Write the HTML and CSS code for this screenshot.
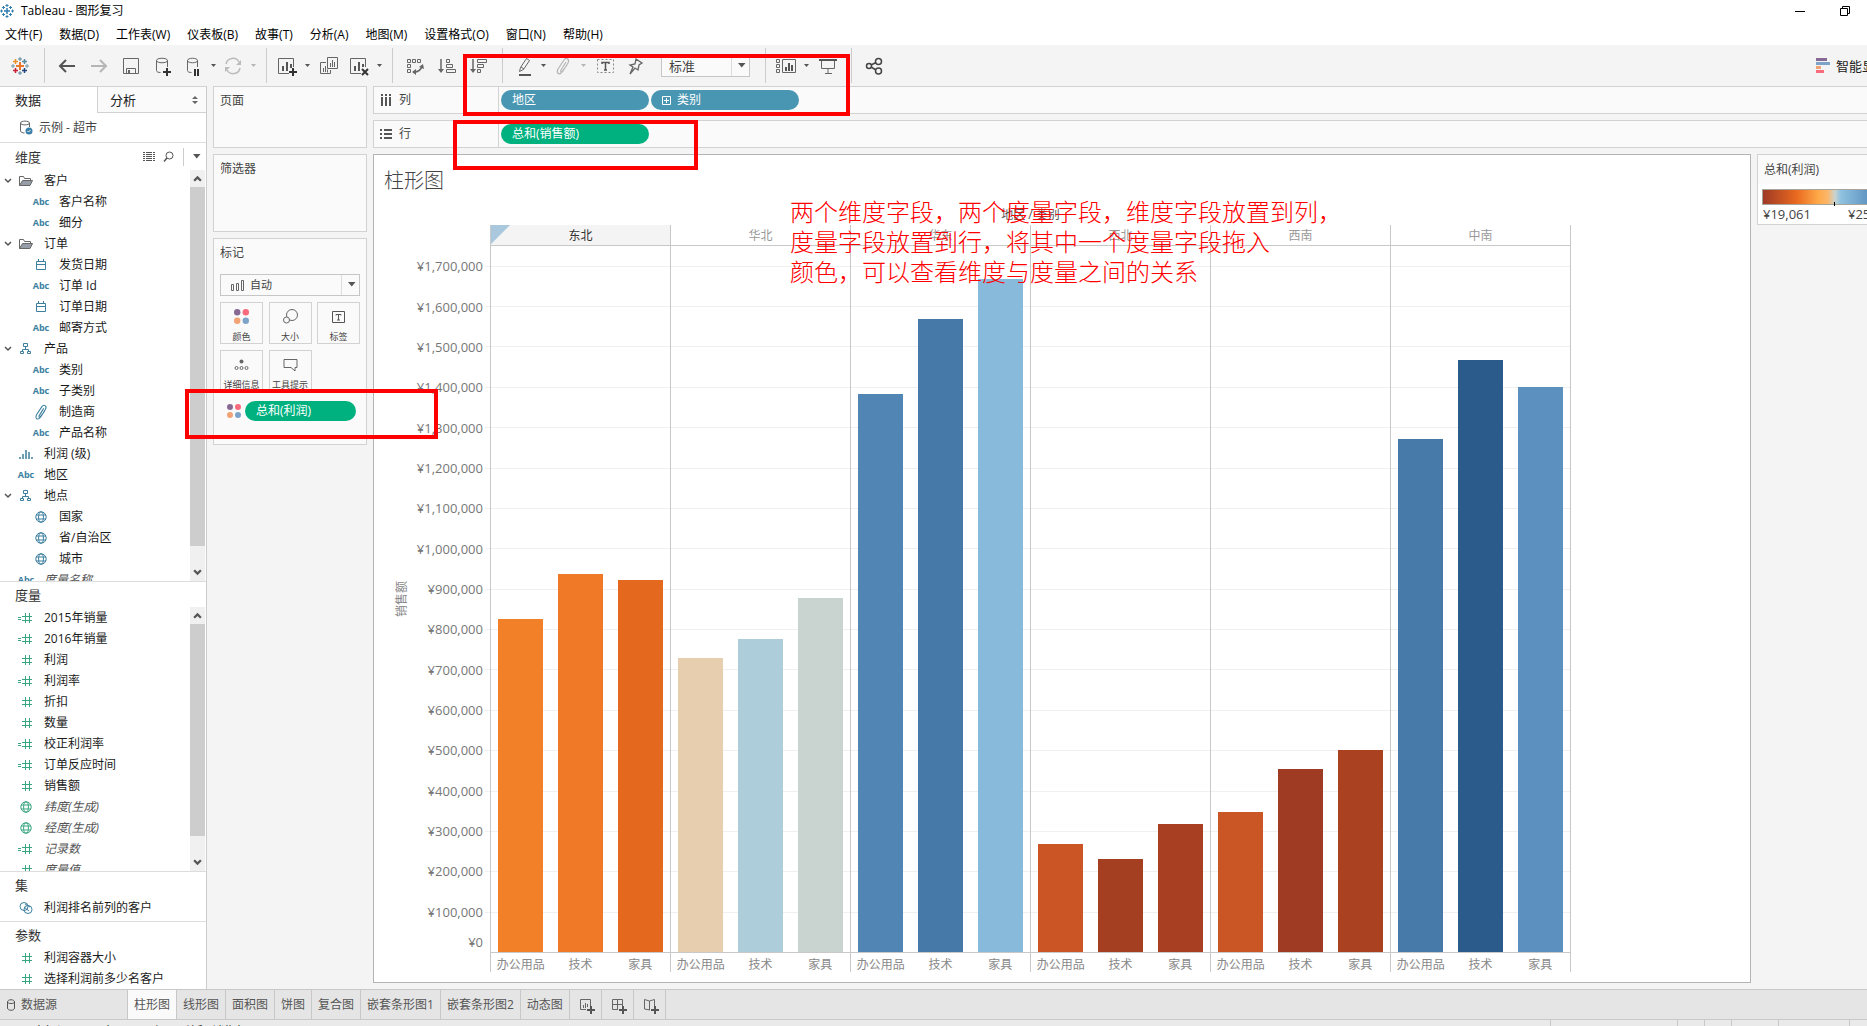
FILE: index.html
```html
<!DOCTYPE html>
<html lang="zh-CN">
<head>
<meta charset="utf-8">
<title>Tableau - 图形复习</title>
<link rel="stylesheet" href="styles.css">
</head>
<body>
<svg class="defs" aria-hidden="true">
  <defs>
    <symbol id="logo" viewBox="0 0 20 20"><g fill="none" stroke-width="2"><path stroke="#e8762b" d="M10 6v8M6 10h8"/><path stroke="#5b879b" stroke-width="1" d="M10 1v4M8 3h4M10 15v4M8 17h4"/><path stroke="#eb912c" stroke-width="1.500" d="M5.500 3v5M3 5.500h5"/><path stroke="#59879b" stroke-width="1.500" d="M14.500 3v5M12 5.500h5"/><path stroke="#c72035" stroke-width="1.500" d="M5.500 12v5M3 14.500h5"/><path stroke="#1f447e" stroke-width="1.500" d="M14.500 12v5M12 14.500h5"/><path stroke="#7099a6" stroke-width="1" d="M1 10h4M3 8v4M15 10h4M17 8v4"/></g></symbol>
    <symbol id="logo-blue" viewBox="0 0 14 14"><g fill="none" stroke="#2f7fb0"><path stroke-width="1.500" d="M7 4v6M4 7h6"/><path d="M7 0v3M5.500 1.500h3M7 11v3M5.500 12.500h3M0 7h3M1.500 5.500v3M11 7h3M12.500 5.500v3M3.500 2v3M2 3.500h3M10.500 2v3M9 3.500h3M3.500 9v3M2 10.500h3M10.500 9v3M9 10.500h3"/></g></symbol>
    <symbol id="back" viewBox="0 0 20 20"><path fill="none" stroke="#555" stroke-width="2" d="M18 10H3M9 4L3 10l6 6"/></symbol>
    <symbol id="fwd" viewBox="0 0 20 20"><path fill="none" stroke="#b5b5b5" stroke-width="2" d="M2 10h15M11 4l6 6-6 6"/></symbol>
    <symbol id="save" viewBox="0 0 20 20"><path fill="none" stroke="#666" d="M2.500 2.500h15v15h-15zM5.500 17v-4.500h9V17"/><path fill="#666" d="M7 14h2v3H7z"/></symbol>
    <symbol id="dbplus" viewBox="0 0 20 20"><path fill="none" stroke="#666" d="M3.500 4.500v10c0 1.500 2 2 4 2M14.500 4.500V11M3.500 4.500c0-3 11-3 11 0s-11 3-11 0"/><path stroke="#333" stroke-width="2" d="M14 12v8M10 16h8"/></symbol>
    <symbol id="dbpause" viewBox="0 0 20 20"><path fill="none" stroke="#666" d="M4.500 4.500v10c0 1.500 2 2 4 2M14.500 4.500V11M4.500 4.500c0-3 10-3 10 0s-10 3-10 0"/><path stroke="#333" stroke-width="2" d="M12 13v7M15 13v7"/></symbol>
    <symbol id="refresh" viewBox="0 0 20 20"><path fill="none" stroke="#bbb" stroke-width="1.500" d="M3 8a7 7 0 0 1 13-2M17 12a7 7 0 0 1-13 2"/><path fill="#bbb" d="M18 4v5h-5zM2 16v-5h5z"/></symbol>
    <symbol id="caret" viewBox="0 0 8 8"><path fill="currentColor" d="M2 2h5L4.500 5z"/></symbol>
    <symbol id="newsheet" viewBox="0 0 20 20"><path fill="none" stroke="#666" d="M12 17.500H1.500v-15h15V11"/><path stroke="#555" stroke-width="2" d="M6 10v5M10 6v9M14 8v4"/><path stroke="#333" stroke-width="2" d="M16 12v8M12 16h8"/></symbol>
    <symbol id="dupsheet" viewBox="0 0 20 20"><path fill="none" stroke="#666" d="M8.500 1.500h10v11h-10zM7 6.500H1.500v11h10V14"/><path stroke="#666" d="M11.500 7v4M13.500 4v7M15.500 6v5M4.500 12v4M6.500 10v6M8.500 13.500v3"/></symbol>
    <symbol id="clearsheet" viewBox="0 0 20 20"><path fill="none" stroke="#666" d="M12 17.500H1.500v-15h15V11"/><path stroke="#555" stroke-width="2" d="M6 10v5M10 6v9M14 8v3"/><path stroke="#333" stroke-width="2" d="M13 13l6 6M19 13l-6 6"/></symbol>
    <symbol id="swap" viewBox="0 0 20 20"><path fill="none" stroke="#666" d="M2.500 3.500h3v3h-3zM7.500 3.500h3v3h-3zM12.500 3.500h3v3h-3zM2.500 8.500h3v3h-3zM2.500 13.500h3v3h-3z"/><path fill="none" stroke="#666" stroke-width="1.500" d="M9 16c4 0 7-2 8-6"/><path fill="#666" d="M7 16l4-3v6zM14 11l4-3 1 5z"/></symbol>
    <symbol id="sortasc" viewBox="0 0 20 20"><path stroke="#666" stroke-width="1.500" d="M4 3v12"/><path fill="#666" d="M1 13h6l-3 4z"/><path fill="none" stroke="#666" d="M9.500 3.500h3v3h-3zM9.500 8.500h6v3h-6zM9.500 13.500h9v3h-9z"/></symbol>
    <symbol id="sortdesc" viewBox="0 0 20 20"><path stroke="#666" stroke-width="1.500" d="M4 3v12"/><path fill="#666" d="M1 13h6l-3 4z"/><path fill="none" stroke="#666" d="M8.500 3.500h9v3h-9zM8.500 8.500h6v3h-6zM8.500 13.500h3v3h-3z"/></symbol>
    <symbol id="pen" viewBox="0 0 20 20"><path fill="none" stroke="#666" d="M6.500 15.500l1-4 6-9 3 2-6 9zM8 11l3 2"/><path stroke="#555" stroke-width="2" d="M6 19h12"/></symbol>
    <symbol id="clip" viewBox="0 0 20 20"><path fill="none" stroke="currentColor" stroke-width="1.200" d="M13 6l-5 8c-1 2 1 3 2 1l5-8c2-4-2-6-4-3L5 13c-2 4 1 6 3 4l6-8"/></symbol>
    <symbol id="textbox" viewBox="0 0 20 20"><path fill="none" stroke="#888" stroke-dasharray="2 2" d="M2.500 3.500h16v13h-16z"/><path stroke="#555" stroke-width="1.500" fill="none" d="M7 8V6.500h7V8M10.500 6v8M9 14h3"/></symbol>
    <symbol id="pin" viewBox="0 0 20 20"><path fill="none" stroke="#666" stroke-width="1.300" d="M9 3l6 4-3 2-1 5-3-2-5 6 3-7-3-2 5-1z"/></symbol>
    <symbol id="cards" viewBox="0 0 22 20"><path fill="none" stroke="#666" d="M1.500 3.500h3v3h-3zM1.500 8.500h3v3h-3zM1.500 13.500h3v3h-3zM7.500 3.500h13v13h-13z"/><path stroke="#555" stroke-width="2" d="M11 11v4M14 7v8M17 9v6"/></symbol>
    <symbol id="present" viewBox="0 0 20 20"><path fill="none" stroke="#666" d="M3.500 4v8.500h13V4M10 13v4M7 17.500h7"/><path stroke="#555" stroke-width="2" d="M1 4h18"/></symbol>
    <symbol id="share" viewBox="0 0 20 20"><g fill="none" stroke="#444" stroke-width="1.500"><circle cx="5" cy="10" r="2.500"/><circle cx="14.500" cy="5.500" r="3"/><circle cx="14.500" cy="15" r="3"/><path d="M7 9l5-2.500M7 11l5 3"/></g></symbol>
    <symbol id="folder" viewBox="0 0 16 12"><path fill="#fff" stroke="#666" d="M1.500 10.500v-9h4l1 2h6V5"/><path fill="#979da8" stroke="#666" d="M1.500 10.500l3-5h10l-2.500 5z"/></symbol>
    <symbol id="chev" viewBox="0 0 8 8"><path fill="none" stroke="#555" stroke-width="1.500" d="M1 2l3 3 3-3"/></symbol>
    <symbol id="date" viewBox="0 0 12 12"><path fill="none" stroke="#3c7f9f" d="M1.500 2.500h9v8h-9zM1 5.500h10M3.500 0v3M8.500 0v3"/></symbol>
    <symbol id="tree" viewBox="0 0 12 12"><path fill="none" stroke="#3c7f9f" d="M3.500.500h4v3h-4zM.500 8.500h3v2h-3zM7.500 8.500h3v2h-3zM5.500 4v2.500M2.500 8V6.500h6V8"/></symbol>
    <symbol id="bins" viewBox="0 0 16 12"><path stroke="#3c7f9f" stroke-width="1.500" d="M2 9v2M5 6v5M8 2v9M11 4v7M14 9v2"/></symbol>
    <symbol id="globe" viewBox="0 0 12 12"><g fill="none" stroke="currentColor"><circle cx="6" cy="6" r="5.200"/><ellipse cx="6" cy="6" rx="2.400" ry="5.200"/><path d="M1 4h10M1 8h10"/></g></symbol>
    <symbol id="num" viewBox="0 0 16 12"><path stroke="#3aa581" d="M7.500 1v10M11.500 1v10M4 4.500h10M4 8.500h10"/></symbol>
    <symbol id="calc" viewBox="0 0 16 12"><path stroke="#3aa581" d="M7.500 1v10M11.500 1v10M4 4.500h10M4 8.500h10M0 5.500h3M0 7.500h3"/></symbol>
    <symbol id="set" viewBox="0 0 14 12"><g fill="none" stroke="#3c7f9f"><circle cx="5" cy="4.500" r="4"/><circle cx="9" cy="7.500" r="4"/><path d="M6 2l5 3M5 5l5 4"/></g></symbol>
    <symbol id="dots" viewBox="0 0 14 14"><circle cx="3" cy="3" r="3" fill="#866a94"/><circle cx="11" cy="3" r="3" fill="#f96a7d"/><circle cx="3" cy="11" r="3" fill="#f2a274"/><circle cx="11" cy="11" r="3" fill="#7ea3c8"/></symbol>
    <symbol id="plus-sheet" viewBox="0 0 16 16"><path fill="none" stroke="#666" d="M7 11.500H1.500v-10h10V8M4.500 7v3M6.500 5v5M8.500 6v3"/><path stroke="#555" stroke-width="2" d="M12 8v8M8 12h8"/></symbol>
    <symbol id="plus-dash" viewBox="0 0 16 16"><path fill="none" stroke="#666" d="M7 11.500H1.500v-10h10V8M6.500 2v9M2 6.500h9"/><path stroke="#555" stroke-width="2" d="M12 8v8M8 12h8"/></symbol>
    <symbol id="plus-story" viewBox="0 0 16 16"><path fill="none" stroke="#666" d="M7 12L1.500 11V1.500L6.500 3v9M6.500 3l5-1.500V8"/><path stroke="#555" stroke-width="2" d="M12 8v8M8 12h8"/></symbol>
  </defs>
</svg>

<div class="app">
  <header class="titlebar">
    <svg class="s14"><use href="#logo-blue"/></svg>
    <span class="title">Tableau - 图形复习</span>
    <button class="win" aria-label="最小化"><svg class="s12" viewBox="0 0 12 12"><path stroke="#000" d="M1 6.500h10"/></svg></button>
    <button class="win" aria-label="还原"><svg class="s12" viewBox="0 0 12 12"><path fill="none" stroke="#000" d="M1.500 3.500h7v7h-7zM3.500 3V1.500h7v7H9"/></svg></button>
  </header>
  <nav class="menubar">
    <a href="#">文件(F)</a><a href="#">数据(D)</a><a href="#">工作表(W)</a><a href="#">仪表板(B)</a><a href="#">故事(T)</a><a href="#">分析(A)</a><a href="#">地图(M)</a><a href="#">设置格式(O)</a><a href="#">窗口(N)</a><a href="#">帮助(H)</a>
  </nav>

  <div class="toolbar">
    <button class="tb first" aria-label="起始页"><svg class="s20"><use href="#logo"/></svg></button>
    <i class="sep"></i>
    <button class="tb" aria-label="撤消"><svg class="s20"><use href="#back"/></svg></button>
    <button class="tb" aria-label="重做"><svg class="s20"><use href="#fwd"/></svg></button>
    <button class="tb" aria-label="保存"><svg class="s20"><use href="#save"/></svg></button>
    <button class="tb" aria-label="新建数据源"><svg class="s20"><use href="#dbplus"/></svg></button>
    <button class="tb narrow" aria-label="暂停自动更新"><svg class="s20"><use href="#dbpause"/></svg></button>
    <button class="tb drop" aria-label="更多"><svg class="s8"><use href="#caret"/></svg></button>
    <button class="tb narrow" aria-label="运行更新"><svg class="s20"><use href="#refresh"/></svg></button>
    <button class="tb drop off" aria-label="更多"><svg class="s8"><use href="#caret"/></svg></button>
    <i class="sep"></i>
    <button class="tb narrow" aria-label="新建工作表"><svg class="s20"><use href="#newsheet"/></svg></button>
    <button class="tb drop" aria-label="更多"><svg class="s8"><use href="#caret"/></svg></button>
    <button class="tb" aria-label="复制"><svg class="s20"><use href="#dupsheet"/></svg></button>
    <button class="tb narrow" aria-label="清除工作表"><svg class="s20"><use href="#clearsheet"/></svg></button>
    <button class="tb drop" aria-label="更多"><svg class="s8"><use href="#caret"/></svg></button>
    <i class="sep"></i>
    <button class="tb" aria-label="交换行和列"><svg class="s20"><use href="#swap"/></svg></button>
    <button class="tb" aria-label="升序"><svg class="s20"><use href="#sortasc"/></svg></button>
    <button class="tb" aria-label="降序"><svg class="s20"><use href="#sortdesc"/></svg></button>
    <i class="sep"></i>
    <button class="tb narrow" aria-label="突出显示"><svg class="s20"><use href="#pen"/></svg></button>
    <button class="tb drop" aria-label="更多"><svg class="s8"><use href="#caret"/></svg></button>
    <button class="tb narrow off" aria-label="组成员"><svg class="s20"><use href="#clip"/></svg></button>
    <button class="tb drop off" aria-label="更多"><svg class="s8"><use href="#caret"/></svg></button>
    <button class="tb" aria-label="显示标记标签"><svg class="s20"><use href="#textbox"/></svg></button>
    <button class="tb" aria-label="固定轴"><svg class="s20"><use href="#pin"/></svg></button>
    <div class="combo fit"><select aria-label="适合"><option>标准</option></select><span class="combo-btn"><svg class="s12"><use href="#caret"/></svg></span></div>
    <i class="sep"></i>
    <button class="tb narrow" aria-label="显示/隐藏卡"><svg class="s22"><use href="#cards"/></svg></button>
    <button class="tb drop" aria-label="更多"><svg class="s8"><use href="#caret"/></svg></button>
    <button class="tb" aria-label="演示模式"><svg class="s20"><use href="#present"/></svg></button>
    <i class="sep"></i>
    <button class="tb" aria-label="共享"><svg class="s20"><use href="#share"/></svg></button>
    <button class="showme"><svg class="s15" viewBox="0 0 15 15"><path fill="#866a94" d="M0 0h11v3H0z"/><path fill="#7ea3c8" d="M0 4h14v3H0z"/><path fill="#f2a274" d="M0 8h5v3H0z"/><path fill="#f96a7d" d="M0 12h8v3H0z"/></svg><span>智能显示</span></button>
  </div>

  <div class="work">
    <aside class="datapane">
      <div class="tabs">
        <button class="tab on">数据</button>
        <button class="tab">分析<svg class="s8" viewBox="0 0 8 8"><path fill="#666" d="M1 3h6L4 0zM1 5h6L4 8z"/></svg></button>
      </div>
      <div class="source"><svg class="s15" viewBox="0 0 15 15"><path fill="none" stroke="#666" d="M2.500 3v8c0 1 2 2 4 2M11.500 3v4M2.500 3c0-2.500 9-2.500 9 0s-9 2.500-9 0"/><circle cx="11" cy="11" r="3.500" fill="#3c7fa8"/><path fill="none" stroke="#fff" d="M9.500 11l1 1 2-2"/></svg><span>示例 - 超市</span></div>

      <section class="group dims">
        <div class="ghead"><h2>维度</h2>
          <button class="mini" aria-label="查看数据"><svg class="s12" viewBox="0 0 12 12"><path stroke="#555" stroke-dasharray="2 1 6 1 2 0" d="M0 1.500h12M0 3.500h12M0 5.500h12M0 7.500h12M0 9.500h12"/></svg></button>
          <button class="mini" aria-label="查找"><svg class="s12" viewBox="0 0 12 12"><circle cx="6.500" cy="4.500" r="3.500" fill="none" stroke="#555"/><path stroke="#555" stroke-width="1.500" d="M4 7L1 10.500"/></svg></button>
          <button class="mini menu" aria-label="菜单"><svg class="s12"><use href="#caret"/></svg></button>
        </div>
        <div class="scroll">
          <ul class="fields">
            <li><svg class="tw"><use href="#chev"/></svg><svg class="ic wide"><use href="#folder"/></svg>客户</li>
            <li class="sub"><b class="ic abc">Abc</b>客户名称</li>
            <li class="sub"><b class="ic abc">Abc</b>细分</li>
            <li><svg class="tw"><use href="#chev"/></svg><svg class="ic wide"><use href="#folder"/></svg>订单</li>
            <li class="sub"><svg class="ic"><use href="#date"/></svg>发货日期</li>
            <li class="sub"><b class="ic abc">Abc</b>订单 Id</li>
            <li class="sub"><svg class="ic"><use href="#date"/></svg>订单日期</li>
            <li class="sub"><b class="ic abc">Abc</b>邮寄方式</li>
            <li><svg class="tw"><use href="#chev"/></svg><svg class="ic"><use href="#tree"/></svg>产品</li>
            <li class="sub"><b class="ic abc">Abc</b>类别</li>
            <li class="sub"><b class="ic abc">Abc</b>子类别</li>
            <li class="sub"><svg class="ic large blue"><use href="#clip"/></svg>制造商</li>
            <li class="sub"><b class="ic abc">Abc</b>产品名称</li>
            <li class="top"><svg class="ic wide"><use href="#bins"/></svg>利润 (级)</li>
            <li class="top"><b class="ic abc">Abc</b>地区</li>
            <li><svg class="tw"><use href="#chev"/></svg><svg class="ic"><use href="#tree"/></svg>地点</li>
            <li class="sub"><svg class="ic blue"><use href="#globe"/></svg>国家</li>
            <li class="sub"><svg class="ic blue"><use href="#globe"/></svg>省/自治区</li>
            <li class="sub"><svg class="ic blue"><use href="#globe"/></svg>城市</li>
            <li class="top gen"><b class="ic abc">Abc</b>度量名称</li>
          </ul>
          <div class="bar-v"><svg class="up" viewBox="0 0 8 8"><path fill="none" stroke="#555" stroke-width="2" d="M1 6l3-3 3 3"/></svg><i class="thumb"></i><svg class="down" viewBox="0 0 8 8"><path fill="none" stroke="#555" stroke-width="2" d="M1 2l3 3 3-3"/></svg></div>
        </div>
      </section>

      <section class="group meas">
        <div class="ghead short"><h2>度量</h2></div>
        <div class="scroll">
          <ul class="fields">
            <li class="top"><svg class="ic wide"><use href="#calc"/></svg>2015年销量</li>
            <li class="top"><svg class="ic wide"><use href="#calc"/></svg>2016年销量</li>
            <li class="top"><svg class="ic wide"><use href="#num"/></svg>利润</li>
            <li class="top"><svg class="ic wide"><use href="#calc"/></svg>利润率</li>
            <li class="top"><svg class="ic wide"><use href="#num"/></svg>折扣</li>
            <li class="top"><svg class="ic wide"><use href="#num"/></svg>数量</li>
            <li class="top"><svg class="ic wide"><use href="#calc"/></svg>校正利润率</li>
            <li class="top"><svg class="ic wide"><use href="#calc"/></svg>订单反应时间</li>
            <li class="top"><svg class="ic wide"><use href="#num"/></svg>销售额</li>
            <li class="top gen"><svg class="ic green-ic"><use href="#globe"/></svg>纬度(生成)</li>
            <li class="top gen"><svg class="ic green-ic"><use href="#globe"/></svg>经度(生成)</li>
            <li class="top gen"><svg class="ic wide"><use href="#calc"/></svg>记录数</li>
            <li class="top gen"><svg class="ic wide"><use href="#num"/></svg>度量值</li>
          </ul>
          <div class="bar-v"><svg class="up" viewBox="0 0 8 8"><path fill="none" stroke="#555" stroke-width="2" d="M1 6l3-3 3 3"/></svg><i class="thumb"></i><svg class="down" viewBox="0 0 8 8"><path fill="none" stroke="#555" stroke-width="2" d="M1 2l3 3 3-3"/></svg></div>
        </div>
      </section>

      <section class="group fixed">
        <div class="ghead short"><h2>集</h2></div>
        <ul class="fields"><li class="top"><svg class="ic wide"><use href="#set"/></svg>利润排名前列的客户</li></ul>
      </section>
      <section class="group fixed last">
        <div class="ghead short"><h2>参数</h2></div>
        <ul class="fields"><li class="top"><svg class="ic wide"><use href="#num"/></svg>利润容器大小</li><li class="top"><svg class="ic wide"><use href="#num"/></svg>选择利润前多少名客户</li></ul>
      </section>
    </aside>

    <div class="cards">
      <section class="card pages"><h3>页面</h3></section>
      <section class="card filters"><h3>筛选器</h3></section>
      <section class="card marks">
        <h3>标记</h3>
        <div class="combo type"><svg class="s15" viewBox="0 0 15 15"><path fill="none" stroke="#666" d="M1.500 6.500h2v6h-2zM6.500 5.500h2v7h-2zM11.500 2.500h2v10h-2z"/></svg><select aria-label="标记类型"><option>自动</option></select><span class="combo-btn"><svg class="s12"><use href="#caret"/></svg></span></div>
        <div class="mbtns">
          <button><svg class="s15"><use href="#dots"/></svg>颜色</button>
          <button><svg class="s15" viewBox="0 0 15 15"><g fill="none" stroke="#666"><circle cx="9" cy="6" r="5.500"/><circle cx="3.500" cy="11" r="3" fill="#fafafa"/></g></svg>大小</button>
          <button><svg class="s15" viewBox="0 0 15 15"><path fill="none" stroke="#555" d="M1.500 2.500h12v11h-12zM5 6.500V5.500h5v1M7.500 5v6M6 11h3"/></svg>标签</button>
          <button><svg class="s15" viewBox="0 0 15 15"><circle cx="7.500" cy="4.500" r="2" fill="#666"/><g fill="none" stroke="#666"><circle cx="2.500" cy="11" r="1.500"/><circle cx="7.500" cy="11" r="1.500"/><circle cx="12.500" cy="11" r="1.500"/></g></svg>详细信息</button>
          <button><svg class="s15" viewBox="0 0 15 15"><path fill="none" stroke="#666" d="M1 2.500h13v8h-2V14l-4-3.500H1z"/></svg>工具提示</button>
        </div>
        <div class="encoding"><svg class="s14"><use href="#dots"/></svg><span class="pill green">总和(利润)</span></div>
      </section>
    </div>

    <main class="main">
      <div class="shelf"><span class="sname"><svg class="s12" viewBox="0 0 12 12"><path stroke="#555" stroke-width="2" d="M2 0v2M6 0v2M10 0v2M2 3v9M6 3v9M10 3v9"/></svg>列</span><span class="pill">地区</span><span class="pill"><svg class="s9" viewBox="0 0 9 9"><path fill="none" stroke="#fff" d="M.500.500h8v8h-8zM2 4.500h5M4.500 2v5"/></svg>类别</span></div>
      <div class="shelf"><span class="sname"><svg class="s12" viewBox="0 0 12 12"><path stroke="#555" stroke-width="2" d="M0 2h2M0 6h2M0 10h2M4 2h8M4 6h8M4 10h8"/></svg>行</span><span class="pill green">总和(销售额)</span></div>
      <div class="view">
        <section class="viz">
          <h1>柱形图</h1>
          <div class="chart">
            <div class="ytitle"><span>销售额</span></div>
            <div class="yaxis"><span>¥1,700,000</span><span>¥1,600,000</span><span>¥1,500,000</span><span>¥1,400,000</span><span>¥1,300,000</span><span>¥1,200,000</span><span>¥1,100,000</span><span>¥1,000,000</span><span>¥900,000</span><span>¥800,000</span><span>¥700,000</span><span>¥600,000</span><span>¥500,000</span><span>¥400,000</span><span>¥300,000</span><span>¥200,000</span><span>¥100,000</span><span class="zero">¥0</span></div>
            <div class="xtitle">地区 / 类别</div>
            <div class="grid"><i></i><i></i><i></i><i></i><i></i><i></i><i></i><i></i><i></i><i></i><i></i><i></i><i></i><i></i><i></i><i></i><i></i></div>
            <div class="panes">
              <div class="pane sel"><h4>东北</h4><div class="bars"><i style="height:47.17%;background:#f28028"></i><i style="height:53.54%;background:#ef7926"></i><i style="height:52.69%;background:#e5681f"></i></div><div class="cats"><span>办公用品</span><span>技术</span><span>家具</span></div></div>
              <div class="pane"><h4>华北</h4><div class="bars"><i style="height:41.64%;background:#e6ceaf"></i><i style="height:44.33%;background:#aecdda"></i><i style="height:50.14%;background:#c9d3d0"></i></div><div class="cats"><span>办公用品</span><span>技术</span><span>家具</span></div></div>
              <div class="pane"><h4>华东</h4><div class="bars"><i style="height:79.04%;background:#5085b4"></i><i style="height:89.66%;background:#4779a8"></i><i style="height:95.33%;background:#87badb"></i></div><div class="cats"><span>办公用品</span><span>技术</span><span>家具</span></div></div>
              <div class="pane"><h4>西北</h4><div class="bars"><i style="height:15.3%;background:#cb5525"></i><i style="height:13.17%;background:#a43f22"></i><i style="height:18.13%;background:#a83f22"></i></div><div class="cats"><span>办公用品</span><span>技术</span><span>家具</span></div></div>
              <div class="pane"><h4>西南</h4><div class="bars"><i style="height:19.83%;background:#cb5625"></i><i style="height:25.92%;background:#9f3b22"></i><i style="height:28.61%;background:#aa4222"></i></div><div class="cats"><span>办公用品</span><span>技术</span><span>家具</span></div></div>
              <div class="pane end"><h4>中南</h4><div class="bars"><i style="height:72.66%;background:#4779a9"></i><i style="height:83.85%;background:#2b5b8a"></i><i style="height:80.03%;background:#5c90bf"></i></div><div class="cats"><span>办公用品</span><span>技术</span><span>家具</span></div></div>
            </div>
          </div>
        </section>
        <aside class="legend">
          <h3>总和(利润)</h3>
          <div class="ramp"><i></i></div>
          <div class="range"><span>¥19,061</span><span>¥252,615</span></div>
        </aside>
      </div>
    </main>
  </div>

  <nav class="sheets">
    <a class="src" href="#"><svg class="s12" viewBox="0 0 12 12"><path fill="none" stroke="#555" d="M2.500 3v6c0 3 7 3 7 0V3c0-3-7-3-7 0 0 2 7 2 7 0"/></svg>数据源</a><a class="on" href="#">柱形图</a><a href="#">线形图</a><a href="#">面积图</a><a href="#">饼图</a><a href="#">复合图</a><a href="#">嵌套条形图1</a><a href="#">嵌套条形图2</a><a href="#">动态图</a>
    <button aria-label="新建工作表"><svg class="s16"><use href="#plus-sheet"/></svg></button><button aria-label="新建仪表板"><svg class="s16"><use href="#plus-dash"/></svg></button><button aria-label="新建故事"><svg class="s16"><use href="#plus-story"/></svg></button>
  </nav>
  <footer class="status"><span>18 个标记</span><span>1 行 x 18 列</span><span>总和(销售额)</span><i class="w127"></i><i class="w27"></i><i class="w27"></i><i class="w47"></i><i class="w71"></i><i class="w18"></i></footer>

  <div class="mark m1"></div>
  <div class="mark m2"></div>
  <div class="mark m3"></div>
  <p class="note">两个维度字段，两个度量字段，维度字段放置到列，<br>度量字段放置到行，将其中一个度量字段拖入<br>颜色，可以查看维度与度量之间的关系</p>
</div>
</body>
</html>
```
FILE: styles.css
```css
* { box-sizing: border-box; }
html, body { margin: 0; height: 100%; overflow: hidden; }
body { font: 12px/20px "Open Sans", "Noto Sans CJK SC", sans-serif; color: #222; background: #f4f4f4; }
h1, h2, h3, h4, p, ul { margin: 0; padding: 0; font-weight: 400; }
li { list-style: none; }
i { font-style: normal; }
a { color: inherit; text-decoration: none; }
button, select { font: inherit; color: inherit; background: none; border: 0; padding: 0; margin: 0; border-radius: 0; }
select { appearance: none; flex: 1; min-width: 0; }
svg { flex: none; }
.defs { position: absolute; width: 0; height: 0; }
.s8 { width: 8px; height: 8px; }
.s9 { width: 9px; height: 9px; }
.s12 { width: 12px; height: 12px; }
.s14 { width: 14px; height: 14px; }
.s15 { width: 15px; height: 15px; }
.s16 { width: 16px; height: 16px; }
.s20 { width: 20px; height: 20px; }
.s22 { width: 22px; height: 20px; }

/* the status bar runs past the lower edge of the window */
.app { position: relative; display: flex; flex-direction: column; height: calc(100vh + 16px); }

.titlebar { display: flex; align-items: center; height: 24px; padding-bottom: 2px; background: #fff; color: #000; }
.title { flex: 1; padding-left: 7px; }
.win { width: 45px; height: 20px; }
.win svg { display: block; margin: 0 auto; }
.menubar { display: flex; gap: 17px; height: 21px; padding-left: 5px; line-height: 22px; background: #fff; color: #000; }
.titlebar, .menubar, .toolbar, .sheets, .status { flex: none; }

.toolbar { display: flex; align-items: center; height: 41px; background: #f4f4f4; white-space: nowrap; overflow: hidden; }
.tb { display: flex; flex: none; align-items: center; justify-content: center; width: 32px; height: 28px; color: #555; }
.tb.first { width: 37px; padding-left: 3px; }
.tb.narrow { width: 28px; }
.tb.drop { width: 12px; }
.tb.off { color: #b5b5b5; }
.sep { flex: none; width: 1px; height: 35px; margin: 0 6px 0 7px; background: #ccc; }
.combo { display: flex; align-items: center; border: 1px solid #c6c6c6; background: #fafafa; color: #444; }
.combo-btn { display: flex; align-items: center; justify-content: center; width: 18px; height: 100%; border-left: 1px solid #ddd; color: #555; }
.fit { flex: none; width: 89px; height: 22px; margin: 0 8px; padding-left: 7px; font-size: 13px; }
.showme { display: flex; align-items: center; gap: 5px; width: 51px; margin-left: auto; overflow: hidden; font-size: 13px; }

.work { display: flex; flex: 1; min-height: 0; }

.datapane { display: flex; flex-direction: column; flex: none; width: 207px; background: #fff; border-right: 1px solid #ccc; border-top: 1px solid #d2d2d2; }
.tabs { display: flex; flex: none; height: 26px; font-size: 13px; }
.tab { display: flex; align-items: center; justify-content: space-between; flex: 1; padding: 0 7px 0 12px; background: #fafafa; border: solid #d2d2d2; border-width: 0 0 1px 1px; }
.tab.on { flex: none; width: 97px; padding-left: 15px; background: #fff; border: 0; }
.source { display: flex; flex: none; align-items: center; gap: 6px; height: 29px; padding-left: 18px; color: #444; }
.group { display: flex; flex-direction: column; min-height: 0; border-top: 1px solid #ddd; }
.dims { flex: 410 1 28px; }
.meas { flex: 263 1 26px; }
.fixed { flex: none; height: 50px; }
.last { height: 68px; overflow: hidden; }
.ghead { display: flex; flex: none; align-items: center; gap: 8px; height: 27px; padding-left: 15px; color: #333; }
.ghead h2 { flex: 1; font-size: 13px; }
.ghead.short { height: 25px; }
.mini { display: flex; align-items: center; height: 18px; color: #555; }
.mini.menu { width: 23px; padding-left: 6px; border-left: 1px solid #ccc; }
.scroll { display: flex; flex: 1; min-height: 0; overflow: hidden; padding-right: 1px; }
.fields { flex: 1; }
.fields li { display: flex; align-items: center; height: 21px; white-space: nowrap; color: #1a1a1a; }
.fields li.top { padding-left: 16px; }
.fields li.sub { padding-left: 31px; }
.fields li.gen { font-style: italic; color: #555; }
.tw { width: 8px; height: 8px; margin: 0 4px; }
.ic { width: 12px; height: 12px; margin: 0 12px 0 4px; }
.ic.wide { width: 16px; margin: 0 10px 0 2px; }
.ic.large { width: 18px; height: 18px; margin: 0 9px 0 1px; }
.ic.abc { width: 18px; height: 21px; margin: 0 9px 0 1px; font: 700 9px/21px "Open Sans", sans-serif; color: #3c7f9f; text-align: center; }
.blue { color: #3c7f9f; }
.green-ic { color: #3aa581; }
.bar-v { display: flex; flex-direction: column; align-items: center; flex: none; width: 15px; background: #f0f0f0; }
.up, .down { width: 9px; height: 17px; }
.thumb { flex: 1; width: 15px; background: #cdcdcd; }
.down { margin-top: 18px; }

.cards { display: flex; flex-direction: column; gap: 6px; flex: none; width: 166px; padding: 0 6px; }
.card { flex: none; background: #fafafa; border: 1px solid #d2d2d2; padding: 4px 6px; color: #444; }
.card h3 { font-size: 12px; }
.pages { height: 62px; }
.filters { height: 78px; }
.marks { height: 207px; }
.type { height: 22px; margin-top: 11px; padding-left: 9px; gap: 5px; font-size: 11px; }
.mbtns { display: grid; grid-template-columns: repeat(3, 43px); justify-content: space-between; gap: 6px 0; height: 87px; margin-top: 6px; overflow: hidden; }
.mbtns button { display: flex; flex-direction: column; align-items: center; gap: 6px; height: 42px; padding-top: 6px; border: 1px solid #d2d2d2; font-size: 9px; line-height: 14px; }
.encoding { display: flex; align-items: center; gap: 4px; margin-top: 12px; padding: 0 4px 0 7px; }
.pill { display: flex; align-items: center; gap: 6px; height: 20px; padding: 0 11px; border-radius: 10px; background: #4996b2; color: #fff; }
.pill.green { background: #00b180; }
.encoding .pill { flex: 1; }

.main { display: flex; flex-direction: column; gap: 6px; flex: 1; min-width: 0; }
.shelf { display: flex; align-items: center; gap: 2px; flex: none; height: 28px; background: #fafafa; border: 1px solid #d2d2d2; border-right: 0; color: #444; }
.sname { display: flex; align-items: center; gap: 7px; width: 125px; height: 100%; padding-left: 6px; border-right: 1px solid #d2d2d2; }
.shelf .pill { width: 148px; }
.view { display: flex; gap: 6px; flex: 1; min-height: 0; }
.viz { display: flex; flex-direction: column; flex: 1; min-width: 0; margin-bottom: 6px; padding: 10px; background: #fff; border: 1px solid #b4b4b4; }
.viz h1 { flex: none; font-size: 20px; line-height: 32px; color: #444; font-weight: 300; }
.chart { display: grid; grid-template: 28px 21px minmax(0, 1fr) 20px / 28px 73px 5px 1081px; flex: 1; min-height: 0; color: #888; }
.ytitle { grid-area: 3 / 1; display: flex; align-items: center; justify-content: flex-end; }
.ytitle span { writing-mode: vertical-rl; text-orientation: sideways; transform: rotate(180deg); }
.yaxis { grid-area: 3 / 2; display: flex; flex-direction: column; padding-right: 2px; font-size: 13px; color: #777; }
.yaxis span { display: flex; flex: 1 1 0; min-height: 0; align-items: center; justify-content: flex-end; }
.yaxis .zero { flex-grow: 0.5; }
.xtitle { grid-area: 1 / 4; align-self: end; line-height: 20px; text-align: center; color: #555; }
.grid { grid-area: 3 / 3 / 4 / 5; display: flex; flex-direction: column; }
.grid::before { content: ""; flex: 0.5 1 0; }
.grid i { flex: 1 1 0; border-top: 1px solid #f0f0f0; }
.panes { grid-area: 2 / 4 / 5 / 5; display: flex; min-height: 0; }
.pane { display: flex; flex-direction: column; flex: 1; border-left: 1px solid #c8c8c8; }
.pane.end { flex: 1 0 1px; border-right: 1px solid #c8c8c8; }
.pane h4 { flex: none; height: 21px; line-height: 22px; font-size: 12px; text-align: center; border-bottom: 1px solid #c8c8c8; color: #999; }
.pane.sel h4 { color: #333; background: linear-gradient(135deg, #a9c8de 13px, transparent 14px) 0 0 / 20px 20px no-repeat #f4f4f4; }
.bars { display: flex; align-items: flex-end; gap: 15px; flex: 1; min-height: 0; padding: 0 7px; border-bottom: 1px solid #c8c8c8; }
.bars i { flex: 1; }
.cats { display: grid; grid-template-columns: repeat(3, 1fr); flex: none; height: 19px; line-height: 24px; text-align: center; }

.legend { flex: none; width: 110px; height: 71px; overflow: hidden; background: #fff; border: 1px solid #d2d2d2; border-right: 0; white-space: nowrap; color: #444; }
.legend h3 { height: 29px; padding: 5px 6px 0; font-size: 12px; background: #fafafa; }
.ramp { width: 146px; height: 16px; margin: 5px 4px 0; border: 1px solid #a5a59b; background: linear-gradient(90deg, #9e3a26, #e8681f 23%, #fea747 38%, #fbb76a 45%, #c9d3d0 50%, #8fc2df 54%, #5b90bf 75%, #2b5b8a); }
.ramp i { display: block; width: 1px; height: 4px; margin: 12px 0 0 71px; background: #000; }
.range { display: flex; gap: 37px; padding-left: 5px; font-size: 13px; line-height: 19px; }

.sheets { display: flex; height: 31px; background: #e5e5e5; border: solid #c8c8c8; border-width: 1px 0; color: #555; }
.sheets a, .sheets button { display: flex; align-items: center; justify-content: center; padding: 0 6px; border-right: 1px solid #c8c8c8; white-space: nowrap; }
.sheets button { width: 32px; padding: 3px 4px 0 8px; }
.sheets .src { justify-content: flex-start; gap: 4px; width: 128px; padding-left: 5px; }
.sheets .on { background: #fafafa; }
.status { display: flex; gap: 26px; height: 22px; padding: 2px 0 0 16px; background: #eaeaea; overflow: hidden; }
.status i { height: 22px; margin: -2px 0 0 -26px; border-left: 1px solid #c8c8c8; }
.status .w127 { margin-left: auto; width: 127px; }
.w27 { width: 27px; }
.w47 { width: 47px; }
.w71 { width: 71px; }
.w18 { width: 18px; }

/* hand-drawn callouts laid over the window */
.mark { position: absolute; border: 4px solid #f00; }
.m1 { left: 463px; top: 54px; width: 387px; height: 62px; }
.m2 { left: 453px; top: 120px; width: 245px; height: 50px; }
.m3 { left: 185px; top: 389px; width: 253px; height: 50px; }
.note { position: absolute; left: 790px; top: 197px; font-size: 24px; line-height: 30px; font-weight: 300; color: #f00; white-space: nowrap; }
```
